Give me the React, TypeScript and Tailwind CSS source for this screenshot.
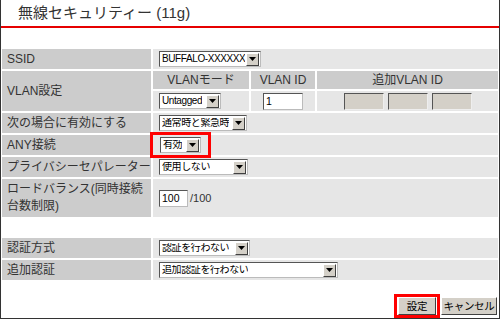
import * as React from 'react'

const font = { fontFamily: '"Liberation Sans", "Noto Sans CJK JP", sans-serif' }

function Arrow() {
  return (
    <div className="flex items-center justify-center w-[13px] h-[13px] bg-[#d4d0c8] border border-t-white border-l-white border-b-[#404040] border-r-[#404040] shrink-0">
      <svg width="7" height="4" viewBox="0 0 7 4">
        <path d="M0 0h7L3.5 4z" fill="#000" />
      </svg>
    </div>
  )
}

function Select({ text, className }: { text: string; className: string }) {
  return (
    <div className={'flex items-center justify-between h-[16px] bg-white border border-t-[#555] border-l-[#555] border-b-[#bbb] border-r-[#bbb] pl-[2px] pr-[1px] text-[10px] tracking-[-0.4px] leading-none text-black ' + className}>
      <span className="whitespace-nowrap overflow-hidden">{text}</span>
      <Arrow />
    </div>
  )
}

function Row({ label, children, tall }: { label: React.ReactNode; children: React.ReactNode; tall?: boolean }) {
  return (
    <div className={'flex gap-[2px] ' + (tall ? 'h-[38px]' : 'h-[20px]')}>
      <div className="w-[149px] shrink-0 bg-[#cccccc] flex items-center pl-[5px] text-[12px] leading-[17px] text-[#333]">
        {label}
      </div>
      <div className="flex-1 bg-[#e6e6e6] flex items-center pl-[6px]">{children}</div>
    </div>
  )
}

function Button({ text, className }: { text: string; className: string }) {
  return (
    <div className={'flex items-center justify-center h-[18px] bg-[#d4d0c8] border border-t-white border-l-white border-b-[#404040] border-r-[#404040] text-[10.5px] tracking-[-0.3px] whitespace-nowrap text-black leading-none ' + className}>
      {text}
    </div>
  )
}

export default function App() {
  return (
    <div style={font} className="w-[500px] h-[319px] bg-white border-l border-r border-b border-[#333] flex flex-col">
      {/* タイトル */}
      <div className="h-[26px] flex items-center pl-[17px] text-[15px] text-[#333]">
        無線セキュリティー (11g)
      </div>
      <div className="h-[2px] bg-[#e60000]" />

      {/* 設定テーブル */}
      <div className="mt-[21px] px-[1px] flex flex-col gap-[2px]">
        <Row label="SSID">
          <Select text="BUFFALO-XXXXXX" className="w-[102px]" />
        </Row>

        <div className="flex gap-[2px] h-[40px]">
          <div className="w-[149px] shrink-0 bg-[#cccccc] flex items-center pl-[5px] text-[12px] text-[#333]">
            VLAN設定
          </div>
          <div className="flex-1 flex flex-col gap-[2px] text-[12px] text-[#333]">
            <div className="flex gap-[2px] h-[18px]">
              <div className="w-[96px] bg-[#cccccc] flex items-center justify-center">VLANモード</div>
              <div className="w-[64px] bg-[#cccccc] flex items-center justify-center">VLAN ID</div>
              <div className="flex-1 bg-[#cccccc] flex items-center justify-center">追加VLAN ID</div>
            </div>
            <div className="flex gap-[2px] h-[20px]">
              <div className="w-[96px] bg-[#e6e6e6] flex items-center pl-[6px]">
                <Select text="Untagged" className="w-[62px]" />
              </div>
              <div className="w-[64px] bg-[#e6e6e6] flex items-center pl-[12px]">
                <div className="w-[40px] h-[17px] bg-white border border-t-[#555] border-l-[#555] border-b-[#bbb] border-r-[#bbb] text-[10.5px] leading-[15px] pl-[2px] text-black">
                  1
                </div>
              </div>
              <div className="flex-1 bg-[#e6e6e6] flex items-center justify-center gap-[4px]">
                <div className="w-[40px] h-[17px] bg-[#d4d0c8] border border-t-[#555] border-l-[#555] border-b-[#eee] border-r-[#eee]" />
                <div className="w-[40px] h-[17px] bg-[#d4d0c8] border border-t-[#555] border-l-[#555] border-b-[#eee] border-r-[#eee]" />
                <div className="w-[40px] h-[17px] bg-[#d4d0c8] border border-t-[#555] border-l-[#555] border-b-[#eee] border-r-[#eee]" />
              </div>
            </div>
          </div>
        </div>

        <Row label="次の場合に有効にする">
          <Select text="通常時と緊急時" className="w-[88px]" />
        </Row>

        <Row label="ANY接続">
          <div className="relative ml-[1px]">
            <Select text="有効" className="w-[41px]" />
            <div className="absolute -left-[10px] -right-[10px] -top-[5px] -bottom-[5px] border-[3px] border-[#ff0000]" />
          </div>
        </Row>

        <Row label="プライバシーセパレーター">
          <Select text="使用しない" className="w-[89px]" />
        </Row>

        <Row
          tall
          label={
            <span>
              ロードバランス(同時接続
              <br />
              台数制限)
            </span>
          }
        >
          <div className="flex items-center gap-[2px] text-[11px] text-[#333]">
            <div className="w-[29px] h-[17px] bg-white border border-t-[#555] border-l-[#555] border-b-[#bbb] border-r-[#bbb] text-[10.5px] leading-[15px] pl-[2px] text-black">
              100
            </div>
            <span>/100</span>
          </div>
        </Row>

        <div className="h-[17px] bg-white" />

        <Row label="認証方式">
          <Select text="認証を行わない" className="w-[91px]" />
        </Row>
        <Row label="追加認証">
          <Select text="追加認証を行わない" className="w-[179px]" />
        </Row>
      </div>

      {/* ボタン */}
      <div className="mt-auto flex justify-end gap-[5px] pr-[2px] pb-[3px]">
        <div className="relative">
          <Button text="設定" className="w-[38px]" />
          <div className="absolute -left-[4px] -right-[4px] -top-[3px] -bottom-[3px] border-[3px] border-[#ff0000]" />
        </div>
        <Button text="キャンセル" className="w-[56px]" />
      </div>
    </div>
  )
}
